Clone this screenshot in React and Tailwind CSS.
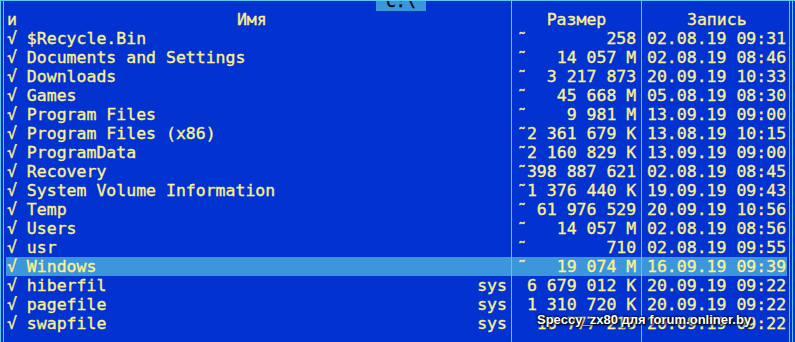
import React from 'react';

// Панель файлового менеджера в текстовом режиме (диск C:\)
const files = [
  { name: '$Recycle.Bin', size: '258', dir: true, date: '02.08.19 09:31' },
  { name: 'Documents and Settings', size: '14 057 M', dir: true, date: '02.08.19 08:46' },
  { name: 'Downloads', size: '3 217 873', dir: true, date: '20.09.19 10:33' },
  { name: 'Games', size: '45 668 M', dir: true, date: '05.08.19 08:30' },
  { name: 'Program Files', size: '9 981 M', dir: true, date: '13.09.19 09:00' },
  { name: 'Program Files (x86)', size: '2 361 679 K', dir: true, date: '13.08.19 10:15' },
  { name: 'ProgramData', size: '2 160 829 K', dir: true, date: '13.09.19 09:00' },
  { name: 'Recovery', size: '398 887 621', dir: true, date: '02.08.19 08:45' },
  { name: 'System Volume Information', size: '1 376 440 K', dir: true, date: '19.09.19 09:43' },
  { name: 'Temp', size: '61 976 529', dir: true, date: '20.09.19 10:56' },
  { name: 'Users', size: '14 057 M', dir: true, date: '02.08.19 08:56' },
  { name: 'usr', size: '710', dir: true, date: '02.08.19 09:55' },
  { name: 'Windows', size: '19 074 M', dir: true, date: '16.09.19 09:39', active: true },
  { name: 'hiberfil', ext: 'sys', size: '6 679 012 K', date: '20.09.19 09:22' },
  { name: 'pagefile', ext: 'sys', size: '1 310 720 K', date: '20.09.19 09:22' },
  { name: 'swapfile', ext: 'sys', size: '16 777 216', date: '20.09.19 09:22' },
];

const Row = ({ className = '', name, size, date }) => (
  <div className={`flex ${className}`}>
    <div className="w-[505px] flex">{name}</div>
    <div className="w-[130px] border-l border-[#5ac8f0] flex">{size}</div>
    <div className="w-[146px] border-l border-[#5ac8f0] flex">{date}</div>
  </div>
);

const App = () => {
  return (
    <div
      className="relative w-[795px] h-[342px] overflow-hidden bg-[#0232d0] border-t border-[#5ac8f0] text-[#fbf08e] text-[16.5px] leading-[19px] [-webkit-text-stroke:0.35px_#fbf08e]"
      style={{ fontFamily: '"DejaVu Sans Mono", monospace' }}
    >
      <div className="flex h-full">
        {/* левая двойная рамка */}
        <div className="w-[6px] flex">
          <div className="w-px bg-[#5ac8f0]" />
          <div className="w-[2px]" />
          <div className="w-px bg-[#5ac8f0]" />
        </div>

        <div className="w-[781px] flex flex-col">
          <Row className="h-[9px]" />
          <Row
            className="h-[19px]"
            name={
              <>
                <span className="pl-px">и</span>
                <span className="pl-[220px]">Имя</span>
              </>
            }
            size={<span className="w-full text-center">Размер</span>}
            date={<span className="pl-[45px]">Запись</span>}
          />
          {files.map((f) => (
            <Row
              key={f.name}
              className={`h-[19px] ${f.active ? 'bg-[#3c96dc]' : ''}`}
              name={
                <div className="flex-1 flex justify-between pl-px pr-[4px] whitespace-pre">
                  <span>{'√ ' + f.name}</span>
                  <span>{f.ext || ''}</span>
                </div>
              }
              size={
                <span className="pl-[5px] whitespace-pre">
                  {(f.dir ? '˜' : ' ') + f.size.padStart(11, ' ')}
                </span>
              }
              date={<span className="pl-[5px] whitespace-pre">{f.date}</span>}
            />
          ))}
          <Row className="flex-1" />
        </div>

        {/* правая двойная рамка */}
        <div className="w-[8px] flex">
          <div className="w-[2px]" />
          <div className="w-px bg-[#5ac8f0]" />
          <div className="w-[2px]" />
          <div className="w-px bg-[#5ac8f0]" />
        </div>
      </div>

      {/* заголовок панели */}
      <div className="absolute left-[376px] top-[-1px] w-[50px] h-[11px] overflow-hidden bg-[#3c96dc]">
        <div className="mt-[-8px] whitespace-pre text-black [-webkit-text-stroke:0.35px_#000]">{' C:\\ '}</div>
      </div>

      {/* водяной знак */}
      <div
        className="absolute left-[537px] top-[309px] text-[13px] font-bold text-white leading-[19px] [-webkit-text-stroke:0px] [text-shadow:0_0_2px_#000,0_0_3px_#000,1px_1px_2px_#000]"
        style={{ fontFamily: '"Liberation Sans", Arial, sans-serif' }}
      >
        Speccy_zx80 для forum.onliner.by
      </div>
    </div>
  );
};

export default App;
